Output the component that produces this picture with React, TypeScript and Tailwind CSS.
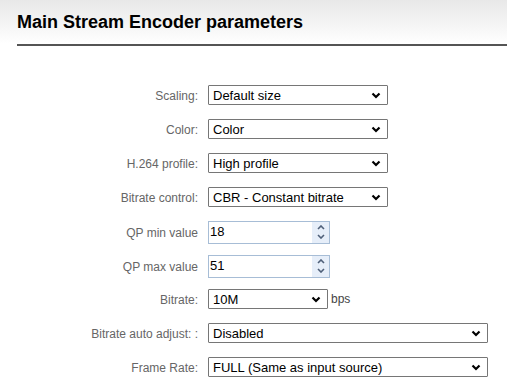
const font = { fontFamily: '"Liberation Sans", Arial, sans-serif' };

type Row =
  | { label: string; kind: "select"; value: string; width: string; suffix?: string }
  | { label: string; kind: "number"; value: string };

const rows: Row[] = [
  { label: "Scaling:", kind: "select", value: "Default size", width: "w-[180px]" },
  { label: "Color:", kind: "select", value: "Color", width: "w-[180px]" },
  { label: "H.264 profile:", kind: "select", value: "High profile", width: "w-[180px]" },
  { label: "Bitrate control:", kind: "select", value: "CBR - Constant bitrate", width: "w-[180px]" },
  { label: "QP min value", kind: "number", value: "18" },
  { label: "QP max value", kind: "number", value: "51" },
  { label: "Bitrate:", kind: "select", value: "10M", width: "w-[120px]", suffix: "bps" },
  { label: "Bitrate auto adjust: :", kind: "select", value: "Disabled", width: "w-[280px]" },
  { label: "Frame Rate:", kind: "select", value: "FULL (Same as input source)", width: "w-[280px]" },
];

const Chevron = () => (
  <svg width="10" height="7" viewBox="0 0 10 7" className="shrink-0">
    <path d="M1.5 1.5L5 5L8.5 1.5" stroke="#000" strokeWidth="2.2" fill="none" />
  </svg>
);

const FakeSelect = ({ value, width }: { value: string; width: string }) => (
  <div
    className={`${width} h-[20px] flex items-center justify-between border border-[#767676] bg-white pl-[4px] pr-[6px] text-[13px] text-black leading-none rounded-[1px]`}
  >
    <span>{value}</span>
    <Chevron />
  </div>
);

const NumberBox = ({ value }: { value: string }) => (
  <div className="w-[122px] h-[23px] flex border border-[#a7bdd6] bg-white">
    <span className="flex-1 flex items-center pl-[1px] text-[13px] text-black">{value}</span>
    <div className="w-[17px] flex flex-col items-center justify-center gap-[4px] bg-[#e6eef9]">
      <svg width="8" height="5" viewBox="0 0 8 5">
        <path d="M1 4L4 1L7 4" stroke="#4f6079" strokeWidth="1.6" fill="none" />
      </svg>
      <svg width="8" height="5" viewBox="0 0 8 5">
        <path d="M1 1L4 4L7 1" stroke="#4f6079" strokeWidth="1.6" fill="none" />
      </svg>
    </div>
  </div>
);

export default function App() {
  return (
    <div className="w-[507px] h-[384px] bg-white overflow-hidden" style={font}>
      <div className="h-[44px] bg-gradient-to-b from-[#e8e8e8] to-white pl-[17px] pt-[11px]">
        <h1 className="text-[18px] font-bold text-black leading-[22px]">Main Stream Encoder parameters</h1>
      </div>
      <div className="ml-[17px] h-[2px] bg-[#555555]" />

      <div className="mt-[32px] flex flex-col">
        {rows.map((r, i) => (
          <div
            key={r.label}
            className={`flex items-center gap-[10px] h-[34px] ${i === 4 ? "mt-[1px]" : ""} ${i === 6 ? "-mt-[1px]" : ""}`}
          >
            <div className="w-[198px] text-right text-[12px] text-[#666666] pt-[2px]">{r.label}</div>
            {r.kind === "select" ? (
              <div className="flex items-center gap-[3px]">
                <FakeSelect value={r.value} width={r.width} />
                {r.suffix && <span className="text-[12px] text-[#444]">{r.suffix}</span>}
              </div>
            ) : (
              <NumberBox value={r.value} />
            )}
          </div>
        ))}
      </div>
    </div>
  );
}
